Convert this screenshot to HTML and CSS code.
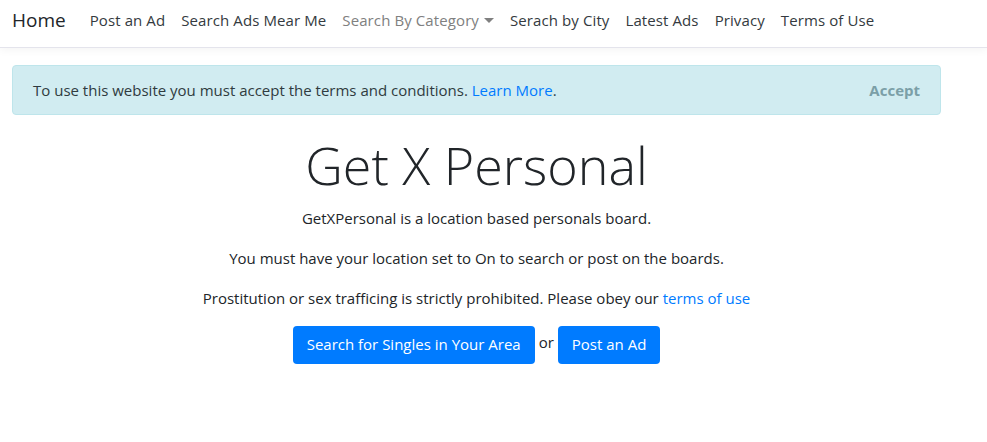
FILE: index.html
```html
<!DOCTYPE html>
<html lang="en">
<head>
    <meta charset="UTF-8">
    <title>Get X Personal</title>
    <link rel="stylesheet" href="styles.css">
</head>
<body>
<nav class="navbar">
    <a class="brand" href="#">Home</a>
    <ul class="nav">
        <li><a class="nav-link" href="#">Post an Ad</a></li>
        <li><a class="nav-link" href="#">Search Ads Mear Me</a></li>
        <li><a class="nav-link muted" href="#">Search By Category<span class="caret"></span></a></li>
        <li><a class="nav-link" href="#">Serach by City</a></li>
        <li><a class="nav-link" href="#">Latest Ads</a></li>
        <li><a class="nav-link" href="#">Privacy</a></li>
        <li><a class="nav-link" href="#">Terms of Use</a></li>
    </ul>
</nav>

<div class="main">
    <div class="alert">
        <span>To use this website you must accept the terms and conditions. <a href="#">Learn More</a>.</span>
        <button class="accept">Accept</button>
    </div>

    <div class="intro">
        <h1>Get X Personal</h1>
        <p>GetXPersonal is a location based personals board.</p>
        <p>You must have your location set to On to search or post on the boards.</p>
        <p>Prostitution or sex trafficing is strictly prohibited. Please obey our <a href="#">terms of use</a></p>
        <div class="actions">
            <a class="btn" href="#">Search for Singles in Your Area</a>
            <span class="or">or</span>
            <a class="btn" href="#">Post an Ad</a>
        </div>
    </div>
</div>
</body>
</html>
```

FILE: styles.css
```css
* {
    box-sizing: border-box;
}
body {
    margin: 0;
    font-family: "Open Sans", "Noto Sans", sans-serif;
    font-size: 15px;
    line-height: 24px;
    color: #212529;
    background: #fff;
}
a {
    text-decoration: none;
}

.navbar {
    display: flex;
    align-items: flex-start;
    height: 48px;
    padding: 8px 12px 0;
    border-bottom: 1px solid #e4e4ec;
    box-shadow: 0 3px 8px rgba(0,0,0,.04);
}
.brand {
    font-size: 19px;
    line-height: 24px;
    color: #212529;
    margin-right: 16px;
}
.nav {
    display: flex;
    list-style: none;
    margin: 0;
    padding: 0;
}
.nav-link {
    display: block;
    padding: 0 8px;
    color: #343a40;
    letter-spacing: .1px;
}
.nav-link.muted {
    color: #808080;
}
.caret {
    display: inline-block;
    margin-left: 5px;
    vertical-align: 3px;
    border-top: 5px solid #808080;
    border-left: 5px solid transparent;
    border-right: 5px solid transparent;
}

.main {
    width: 929px;
    margin: 17px 0 0 12px;
}
.alert {
    display: flex;
    justify-content: space-between;
    align-items: center;
    height: 50px;
    padding: 0 20px;
    background: #d1ecf1;
    border: 1px solid #bee5eb;
    border-radius: 4px;
    color: #2f3b40;
    margin-bottom: 16px;
}
.alert a {
    color: #007bff;
}
.accept {
    border: none;
    background: none;
    font-family: inherit;
    font-size: 15px;
    font-weight: bold;
    color: #7b9fa7;
    padding: 0;
    cursor: pointer;
}

.intro {
    text-align: center;
}
.intro h1 {
    font-size: 52px;
    font-weight: 300;
    line-height: 67px;
    margin: 0 0 8px;
    color: #212529;
}
.intro p {
    margin: 0 0 16px;
}
.intro p a {
    color: #007bff;
}
.actions {
    display: flex;
    justify-content: center;
    align-items: center;
}
.btn {
    display: inline-block;
    height: 38px;
    line-height: 36px;
    padding: 0 14px;
    border-radius: 4px;
    background: #007bff;
    color: #fff;
}
.or {
    padding: 0 4px;
    position: relative;
    top: -3px;
}
```
